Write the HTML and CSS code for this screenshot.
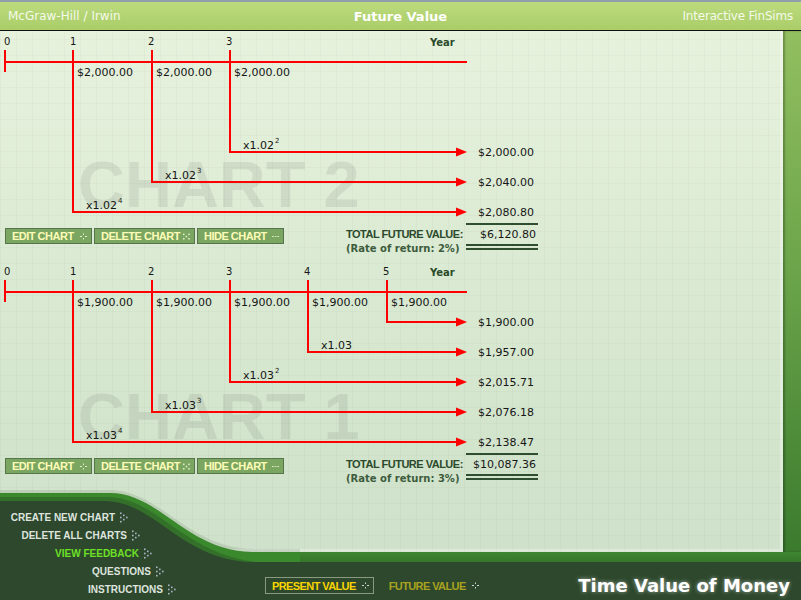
FILE: index.html
```html
<!DOCTYPE html>
<html lang="en">
<head>
    <meta charset="UTF-8">
    <meta name="viewport" content="width=device-width, initial-scale=1.0">
    <title>Future Value</title>
    <link rel="stylesheet" href="styles.css">
</head>
<body>
    <svg class="defs" aria-hidden="true">
        <symbol id="i-cross" viewBox="0 0 7 7">
            <rect x="0" y="3" width="2" height="1"/><rect x="5" y="3" width="2" height="1"/>
            <rect x="3" y="0.5" width="1" height="1.5"/><rect x="3" y="5" width="1" height="1.5"/>
        </symbol>
        <symbol id="i-x" viewBox="0 0 6 6">
            <rect x="0" y="0.5" width="1.3" height="1.3"/><rect x="4.5" y="0.5" width="1.3" height="1.3"/>
            <rect x="2.3" y="2.4" width="1.3" height="1.3"/>
            <rect x="0" y="4.3" width="1.3" height="1.3"/><rect x="4.5" y="4.3" width="1.3" height="1.3"/>
        </symbol>
        <symbol id="i-dash" viewBox="0 0 8 7">
            <rect x="0" y="3" width="2" height="1"/><rect x="3" y="3" width="2" height="1"/><rect x="6" y="3" width="2" height="1"/>
        </symbol>
        <symbol id="i-arr" viewBox="0 0 8 11">
            <rect x="0" y="0.5" width="1.6" height="1.6"/><rect x="0" y="4.7" width="1.6" height="1.6"/><rect x="0" y="8.9" width="1.6" height="1.6"/>
            <rect x="3" y="2.6" width="1.6" height="1.6"/><rect x="3" y="6.8" width="1.6" height="1.6"/>
            <rect x="6" y="4.7" width="1.6" height="1.6"/>
        </symbol>
    </svg>

    <div id="main">
        <div id="top">
            <span class="brand">McGraw-Hill / Irwin</span>
            <span class="title">Future Value</span>
            <span class="brand right">Interactive FinSims</span>
        </div>

        <div id="mid">
            <div id="panel">
                <!-- chart 2 -->
                <div class="chart">
                    <svg class="plot" width="560" height="190">
                        <text class="mark" x="78" y="176">CHART 2</text>
                        <text class="yn" x="4" y="14">0</text>
                        <text class="yn" x="70" y="14">1</text>
                        <text class="yn" x="148" y="14">2</text>
                        <text class="yn" x="226" y="14">3</text>
                        <text class="yl" x="430" y="15">Year</text>
                        <g class="red">
                            <line x1="4" y1="31" x2="467" y2="31"/>
                            <line x1="5" y1="19" x2="5" y2="41"/>
                            <polyline points="73,19 73,181 457,181"/>
                            <polyline points="152,19 152,151 457,151"/>
                            <polyline points="230,19 230,121 457,121"/>
                        </g>
                        <g class="head">
                            <polygon points="456,116.5 467,121 456,125.5"/>
                            <polygon points="456,146.5 467,151 456,155.5"/>
                            <polygon points="456,176.5 467,181 456,185.5"/>
                        </g>
                        <text x="77" y="45">$2,000.00</text>
                        <text x="156" y="45">$2,000.00</text>
                        <text x="234" y="45">$2,000.00</text>
                        <text x="243" y="118">x1.02<tspan class="sup" dx="1" dy="-6">2</tspan></text>
                        <text x="165" y="148">x1.02<tspan class="sup" dx="1" dy="-6">3</tspan></text>
                        <text x="86" y="178">x1.02<tspan class="sup" dx="1" dy="-6">4</tspan></text>
                        <text x="478" y="125">$2,000.00</text>
                        <text x="478" y="155">$2,040.00</text>
                        <text x="478" y="185">$2,080.80</text>
                    </svg>
                    <div class="cfoot">
                        <div class="btns">
                            <div class="btn b-edit">EDIT CHART <svg class="ico"><use href="#i-cross"/></svg></div>
                            <div class="btn b-del">DELETE CHART <svg class="ico"><use href="#i-x"/></svg></div>
                            <div class="btn b-hide">HIDE CHART <svg class="ico"><use href="#i-dash"/></svg></div>
                        </div>
                        <div class="lbls">
                            <div class="tfv">TOTAL FUTURE VALUE:</div>
                            <div class="rate">(Rate of return: 2%)</div>
                        </div>
                        <div class="total">$6,120.80</div>
                    </div>
                </div>

                <!-- chart 1 -->
                <div class="chart">
                    <svg class="plot" width="560" height="190">
                        <text class="mark" x="78" y="178">CHART 1</text>
                        <text class="yn" x="4" y="14">0</text>
                        <text class="yn" x="70" y="14">1</text>
                        <text class="yn" x="148" y="14">2</text>
                        <text class="yn" x="226" y="14">3</text>
                        <text class="yn" x="304" y="14">4</text>
                        <text class="yn" x="383" y="14">5</text>
                        <text class="yl" x="430" y="15">Year</text>
                        <g class="red">
                            <line x1="4" y1="31" x2="467" y2="31"/>
                            <line x1="5" y1="19" x2="5" y2="41"/>
                            <polyline points="73,19 73,181 457,181"/>
                            <polyline points="152,19 152,151 457,151"/>
                            <polyline points="230,19 230,121 457,121"/>
                            <polyline points="308,19 308,91 457,91"/>
                            <polyline points="387,19 387,61 457,61"/>
                        </g>
                        <g class="head">
                            <polygon points="456,56.5 467,61 456,65.5"/>
                            <polygon points="456,86.5 467,91 456,95.5"/>
                            <polygon points="456,116.5 467,121 456,125.5"/>
                            <polygon points="456,146.5 467,151 456,155.5"/>
                            <polygon points="456,176.5 467,181 456,185.5"/>
                        </g>
                        <text x="77" y="45">$1,900.00</text>
                        <text x="156" y="45">$1,900.00</text>
                        <text x="234" y="45">$1,900.00</text>
                        <text x="312" y="45">$1,900.00</text>
                        <text x="391" y="45">$1,900.00</text>
                        <text x="321" y="88">x1.03</text>
                        <text x="243" y="118">x1.03<tspan class="sup" dx="1" dy="-6">2</tspan></text>
                        <text x="165" y="148">x1.03<tspan class="sup" dx="1" dy="-6">3</tspan></text>
                        <text x="86" y="178">x1.03<tspan class="sup" dx="1" dy="-6">4</tspan></text>
                        <text x="478" y="65">$1,900.00</text>
                        <text x="478" y="95">$1,957.00</text>
                        <text x="478" y="125">$2,015.71</text>
                        <text x="478" y="155">$2,076.18</text>
                        <text x="478" y="185">$2,138.47</text>
                    </svg>
                    <div class="cfoot">
                        <div class="btns">
                            <div class="btn b-edit">EDIT CHART <svg class="ico"><use href="#i-cross"/></svg></div>
                            <div class="btn b-del">DELETE CHART <svg class="ico"><use href="#i-x"/></svg></div>
                            <div class="btn b-hide">HIDE CHART <svg class="ico"><use href="#i-dash"/></svg></div>
                        </div>
                        <div class="lbls">
                            <div class="tfv">TOTAL FUTURE VALUE:</div>
                            <div class="rate">(Rate of return: 3%)</div>
                        </div>
                        <div class="total">$10,087.36</div>
                    </div>
                </div>
            </div>
            <div id="side"></div>
        </div>

        <div id="band"></div>

        <div id="foot">
            <div class="tab on">PRESENT VALUE <svg class="ico"><use href="#i-cross"/></svg></div>
            <div class="tab">FUTURE VALUE <svg class="ico"><use href="#i-cross"/></svg></div>
            <div class="tmv">Time Value of Money</div>
        </div>

        <!-- bottom left swoosh -->
        <svg id="curve" width="300" height="74" viewBox="0 0 300 74">
            <path d="M0,2 H110 C160,2 186,59 252,61 H300 V74 H0 Z" fill="rgba(30,70,30,0.12)"/>
            <path d="M0,5 H110 C160,5 185,62 252,64 H300 V74 H0 Z" fill="#3b892d"/>
            <path d="M0,9 H107 C157,9 182,65 256,74 H0 Z" fill="#33712a"/>
            <path d="M0,13 H104 C154,13 178,68 246,74 H0 Z" fill="#2d482d"/>
        </svg>

        <div id="menu">
            <div class="mi">CREATE NEW CHART <svg class="arr"><use href="#i-arr"/></svg></div>
            <div class="mi">DELETE ALL CHARTS <svg class="arr"><use href="#i-arr"/></svg></div>
            <div class="mi hot">VIEW FEEDBACK <svg class="arr"><use href="#i-arr"/></svg></div>
            <div class="mi">QUESTIONS <svg class="arr"><use href="#i-arr"/></svg></div>
            <div class="mi">INSTRUCTIONS <svg class="arr"><use href="#i-arr"/></svg></div>
        </div>
    </div>
</body>
</html>
```

FILE: styles.css
```css
* {
    margin: 0;
    padding: 0;
    box-sizing: border-box;
}
html, body {
    width: 100%;
    height: 100%;
}
body {
    background-color: #2d482d;
    overflow: hidden;
}
.defs {
    position: absolute;
    width: 0;
    height: 0;
}
#main {
    position: relative;
    width: 801px;
    height: 600px;
    background-color: #2d482d;
    font-family: "DejaVu Sans", Verdana, sans-serif;
    overflow: hidden;
}

/* header */
#top {
    height: 31px;
    display: grid;
    grid-template-columns: 1fr auto 1fr;
    align-items: center;
    padding: 0 8px;
    border-top: 2px solid #8e9eaa;
    border-bottom: 1px solid #111;
    background: linear-gradient(#bcdb7e, #aacd68);
    color: #fff;
}
.brand {
    font-size: 12px;
    color: #f4fae8;
}
.brand.right {
    text-align: right;
    letter-spacing: -0.2px;
}
.title {
    font-size: 13px;
    font-weight: bold;
}

/* middle */
#mid {
    display: flex;
    height: 521px;
}
#panel {
    width: 783px;
    background:
        repeating-linear-gradient(90deg, rgba(0,0,0,0.025) 0 1px, transparent 1px 16px),
        repeating-linear-gradient(0deg, rgba(0,0,0,0.025) 0 1px, transparent 1px 16px),
        linear-gradient(#e7f2dd, #d8e8d1 55%, #cfe1ca);
    box-shadow: inset -3px -3px 0 rgba(255,255,255,0.3);
}
#side {
    flex: 1;
    background: linear-gradient(#92bf60, #68a248 50%, #3b7b2e);
    box-shadow: inset 2px 0 2px rgba(0,0,0,0.25);
}
.chart {
    height: 230px;
}
.plot {
    display: block;
}
.plot text {
    font-family: "DejaVu Sans", Verdana, sans-serif;
    font-size: 11px;
    fill: #161616;
}
.plot .yn {
    font-size: 10px;
}
.plot .mark {
    font-family: "Liberation Sans", Arial, sans-serif;
    font-weight: bold;
    font-size: 65px;
    fill: #000;
    opacity: 0.07;
}
.plot .yl {
    font-size: 10px;
    font-weight: bold;
    fill: #2a4a2a;
}
.plot .sup {
    font-size: 7px;
}
.red {
    stroke: #ff0000;
    stroke-width: 2;
    fill: none;
}
.head {
    fill: #ff0000;
}

/* chart footer: buttons and totals */
.cfoot {
    display: grid;
    grid-template-columns: 346px 120px 72px;
    height: 40px;
}
.btns {
    display: flex;
    gap: 2px;
    padding: 7px 0 0 5px;
}
.btn {
    height: 16px;
    display: flex;
    align-items: center;
    justify-content: space-between;
    padding: 0 4px 0 6px;
    background-color: #7ba661;
    border: 1px solid #56754b;
    color: #fdfcb8;
    font-family: "Liberation Sans", Arial, sans-serif;
    font-size: 11px;
    font-weight: bold;
    letter-spacing: -0.5px;
    white-space: nowrap;
}
.b-edit, .b-hide {
    width: 87px;
}
.b-del {
    width: 101px;
}
.ico {
    width: 7px;
    height: 7px;
    fill: #e6eed0;
}
.lbls {
    padding-top: 7px;
    line-height: 13.5px;
    color: #2b4a2b;
    white-space: nowrap;
}
.tfv {
    font-family: "Liberation Sans", Arial, sans-serif;
    font-size: 11px;
    font-weight: bold;
    letter-spacing: -0.5px;
}
.rate {
    font-size: 10px;
    font-weight: bold;
    color: #3d5c3d;
}
.total {
    align-self: start;
    margin-top: 2px;
    border-top: 2px solid #2f4d2f;
    border-bottom: 6px double #2f4d2f;
    padding: 4px 2px 3px 0;
    text-align: right;
    font-size: 11px;
    line-height: 12px;
    color: #161616;
}

/* bottom */
#band {
    height: 10px;
    background: linear-gradient(#3e8632, #367629);
}
#foot {
    height: 38px;
    display: flex;
    align-items: flex-start;
    padding: 15px 11px 0 265px;
}
.tab {
    height: 17px;
    display: flex;
    align-items: center;
    gap: 6px;
    padding: 0 4px 0 6px;
    margin-right: 8px;
    border: 1px solid transparent;
    color: #a9a21f;
    font-family: "Liberation Sans", Arial, sans-serif;
    font-size: 11px;
    font-weight: bold;
    letter-spacing: -0.6px;
}
.tab.on {
    border-color: #8a9a80;
    color: #f8d400;
}
.tab .ico {
    fill: #d2d6d2;
}
.tmv {
    margin-left: auto;
    margin-top: -2px;
    line-height: 22px;
    font-size: 18px;
    font-weight: bold;
    color: #fff;
    text-shadow: 0 0 4px rgba(255,255,255,0.55);
}
#curve {
    position: absolute;
    left: 0;
    top: 488px;
}
#menu {
    position: absolute;
    left: 0;
    top: 508px;
    width: 176px;
}
.mi {
    height: 18px;
    display: flex;
    justify-content: flex-end;
    align-items: center;
    gap: 5px;
    color: #dfe4df;
    font-family: "Liberation Sans", Arial, sans-serif;
    font-size: 10px;
    font-weight: bold;
    white-space: nowrap;
}
.mi.hot {
    color: #6ee026;
}
.mi:nth-child(1) { padding-right: 48px; }
.mi:nth-child(2) { padding-right: 36px; }
.mi:nth-child(3) { padding-right: 24px; }
.mi:nth-child(4) { padding-right: 12px; }
.arr {
    width: 8px;
    height: 11px;
    fill: #a9b8c6;
}
```
